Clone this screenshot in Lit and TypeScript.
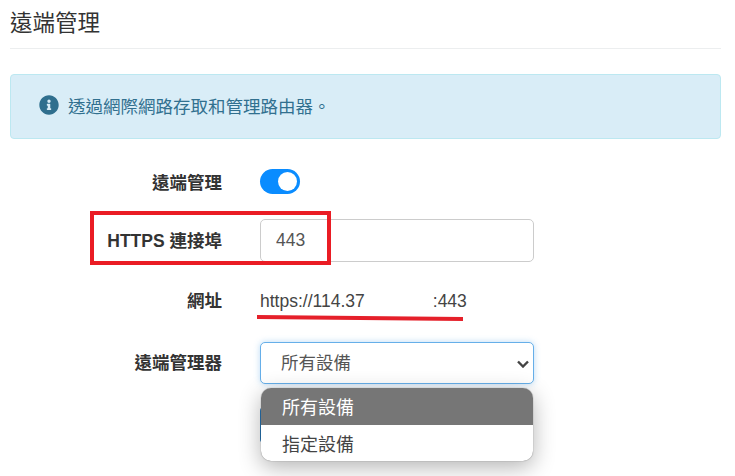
import { html, css, LitElement } from 'lit'
import { customElement, property } from 'lit/decorators.js'

@customElement('app-root')
export class AppRoot extends LitElement {
    static styles = css`
        :host {
            display: block;
            position: relative;
            width: 735px;
            height: 476px;
            overflow: hidden;
            background: #fff;
            box-sizing: border-box;
            padding: 0 14px 0 10px;
            font-family: "Liberation Sans", "Noto Sans CJK TC", sans-serif;
            color: #333;
        }
        .title {
            margin: 0;
            height: 48px;
            box-sizing: content-box;
            border-bottom: 1px solid #eceeef;
            font-size: 22.5px;
            font-weight: 400;
            line-height: 47px;
            color: #333;
        }
        .alert {
            margin-top: 25px;
            height: 65px;
            box-sizing: border-box;
            display: flex;
            align-items: center;
            gap: 9px;
            padding: 0 0 3px 28px;
            background: #d9edf7;
            border: 1px solid #bce8f1;
            border-radius: 4px;
            color: #31708f;
            font-size: 17.5px;
        }
        .alert svg { width: 20px; height: 20px; fill: #2f6f8e; flex: none; }
        .form { margin-top: 30px; display: flex; flex-direction: column; }
        .row {
            display: grid;
            grid-template-columns: 212px 274px;
            column-gap: 38px;
            align-items: center;
        }
        .row label {
            text-align: right;
            font-size: 17.5px;
            font-weight: 700;
            color: #333;
        }
        .row-toggle { height: 25px; }
        .row-port { height: 43px; margin-top: 25px; }
        .row-port label { padding-bottom: 2px; }
        .row-url { height: 24px; margin-top: 25px; }
        .row-url label { padding-bottom: 4px; }
        .row-select { height: 42px; margin-top: 31px; }
        .row-select label { padding-bottom: 4px; }
        .toggle {
            position: relative;
            width: 40px;
            height: 25px;
            border-radius: 13px;
            background: #0a8cff;
        }
        .toggle::after {
            content: '';
            position: absolute;
            top: 3px;
            right: 3px;
            width: 19px;
            height: 19px;
            border-radius: 50%;
            background: #fff;
        }
        input, select {
            width: 100%;
            height: 100%;
            box-sizing: border-box;
            margin: 0;
            background: #fff;
            font-size: 17.5px;
            font-family: inherit;
            color: #555;
            outline: none;
        }
        input {
            padding: 0 15px;
            border: 1px solid #ccc;
            border-radius: 5px;
        }
        .select-wrap { position: relative; height: 100%; }
        select {
            appearance: none;
            padding: 0 30px 0 20px;
            border: 1px solid #66afe9;
            border-radius: 5px;
            box-shadow: 0 0 6px rgba(102, 175, 233, 0.45);
        }
        .chevron {
            position: absolute;
            right: 5px;
            top: 18px;
            width: 12px;
            height: 8px;
            fill: none;
            stroke: #444;
            stroke-width: 2.4;
        }
        .url { font-size: 17.5px; color: #444; white-space: nowrap; }
        .url .hidden { display: inline-block; width: 68px; }
        .save {
            margin: 23px 0 0 250px;
            width: 273px;
            height: 36px;
            border-radius: 4px;
            background: #2a78b8;
        }
        .menu {
            position: absolute;
            left: 261px;
            top: 388px;
            width: 272px;
            border-radius: 10px;
            overflow: hidden;
            background: #fff;
            box-shadow: 0 0 1px rgba(0, 0, 0, 0.6), 0 6px 22px rgba(0, 0, 0, 0.3);
            font-size: 18px;
        }
        .menu div { height: 36.5px; line-height: 40px; padding-left: 21px; color: #444; }
        .menu .active { background: #767676; color: #fff; }
        .mark-box {
            position: absolute;
            left: 90px;
            top: 211px;
            width: 241px;
            height: 54px;
            box-sizing: border-box;
            border: 4px solid #ea1c24;
        }
        .mark-line {
            position: absolute;
            left: 257px;
            top: 316px;
            width: 206px;
            height: 4px;
            background: #e5202a;
            transform: rotate(0.5deg);
        }
    `

    @property({ type: String })
    port = '443'

    render() {
        return html`
        <h1 class="title">遠端管理</h1>
        <div class="alert">
            <svg viewBox="0 0 512 512"><path d="M256 8C119.043 8 8 119.083 8 256c0 136.997 111.043 248 248 248s248-111.003 248-248C504 119.083 392.957 8 256 8zm0 110c23.196 0 42 18.804 42 42s-18.804 42-42 42-42-18.804-42-42 18.804-42 42-42zm56 254c0 6.627-5.373 12-12 12h-88c-6.627 0-12-5.373-12-12v-24c0-6.627 5.373-12 12-12h12v-64h-12c-6.627 0-12-5.373-12-12v-24c0-6.627 5.373-12 12-12h64c6.627 0 12 5.373 12 12v100h12c6.627 0 12 5.373 12 12v24z"></path></svg>
            <span>透過網際網路存取和管理路由器。</span>
        </div>
        <div class="form">
            <div class="row row-toggle">
                <label>遠端管理</label>
                <div class="toggle"></div>
            </div>
            <div class="row row-port">
                <label>HTTPS 連接埠</label>
                <input type="text" .value=${this.port} />
            </div>
            <div class="row row-url">
                <label>網址</label>
                <div class="url">https://114.37<span class="hidden"></span>:443</div>
            </div>
            <div class="row row-select">
                <label>遠端管理器</label>
                <div class="select-wrap">
                    <select>
                        <option>所有設備</option>
                        <option>指定設備</option>
                    </select>
                    <svg class="chevron" viewBox="0 0 12 8"><path d="M1 1.5l5 5 5-5"></path></svg>
                </div>
            </div>
            <div class="save"></div>
        </div>
        <div class="menu">
            <div class="active">所有設備</div>
            <div>指定設備</div>
        </div>
        <div class="mark-box"></div>
        <div class="mark-line"></div>
        `
    }
}

declare global {
    interface HTMLElementTagNameMap {
        'app-root': AppRoot
    }
}
